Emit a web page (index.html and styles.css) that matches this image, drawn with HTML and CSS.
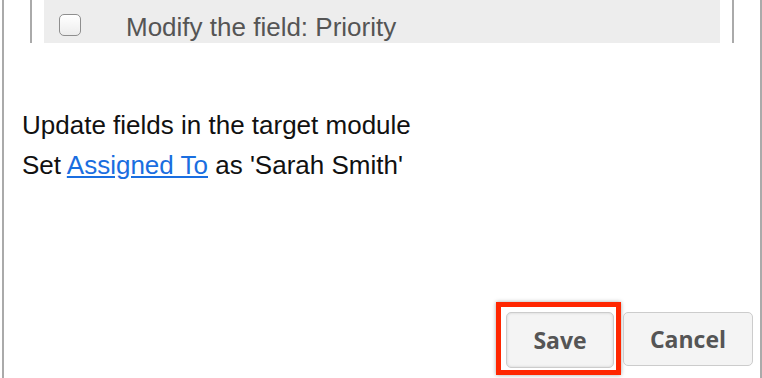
FILE: index.html
```html
<!DOCTYPE html>
<html lang="en">
<head>
    <meta charset="UTF-8">
    <title>Action</title>
    <link rel="stylesheet" href="styles.css">
</head>
<body>
    <div class="dialog">
        <div class="fields">
            <div class="options">
                <label class="option">
                    <span class="check"></span>
                    <span class="option-text">Modify the field: Priority</span>
                </label>
            </div>
        </div>

        <div class="summary">
            <p>Update fields in the target module</p>
            <p>Set <a href="#">Assigned To</a> as 'Sarah Smith'</p>
        </div>

        <div class="actions">
            <span class="highlight">
                <button class="btn btn-save">Save</button>
            </span>
            <button class="btn btn-cancel">Cancel</button>
        </div>
    </div>
</body>
</html>
```

FILE: styles.css
```css
body {
    margin: 0;
    font-family: "Liberation Sans", Arial, sans-serif;
    background-color: #fff;
    color: #111;
}
.dialog {
    margin-left: 2px;
    height: 378px;
    box-sizing: border-box;
    border-left: 2px solid #aaa;
    border-right: 2px solid #aaa;
    display: flex;
    flex-direction: column;
}
.fields {
    margin: 0 26px;
    padding: 0 12px;
    border-left: 2px solid #aaa;
    border-right: 2px solid #aaa;
}
.options {
    background-color: #ededed;
    padding: 14px 0 7px 15px;
}
.option {
    display: flex;
    align-items: center;
    gap: 45px;
    font-size: 26px;
    color: #555;
    height: 22px;
}
.option-text {
    margin-top: 4px;
}
.check {
    flex-shrink: 0;
    width: 20px;
    height: 20px;
    border: 1px solid #8e8e8e;
    border-radius: 5px;
    background: linear-gradient(#fff, #ececec);
    box-shadow: inset 0 1px 1px rgba(255,255,255,0.8);
}
.summary {
    margin-top: 62px;
    padding-left: 18px;
    font-size: 26px;
}
.summary p {
    margin: 0;
    line-height: 40px;
}
.summary a {
    color: #1a6ee0;
}
.actions {
    margin-top: auto;
    display: flex;
    justify-content: flex-end;
    align-items: center;
    gap: 2px;
    padding: 0 7px 3px 0;
}
.highlight {
    display: flex;
    border: 5px solid #ff2600;
    padding: 5px 2px 2px 5px;
    box-shadow: 0 0 4px rgba(0,0,0,0.35);
}
.btn {
    font-family: "Open Sans", sans-serif;
    font-weight: 700;
    font-size: 23px;
    color: #555;
    background-color: #f4f4f4;
    border: 1px solid #ccc;
    border-radius: 5px;
    height: 56px;
    cursor: pointer;
}
.btn-save {
    width: 108px;
    box-shadow: inset 0 0 3px rgba(0,0,0,0.15);
}
.btn-cancel {
    width: 130px;
    height: 54px;
}
```
